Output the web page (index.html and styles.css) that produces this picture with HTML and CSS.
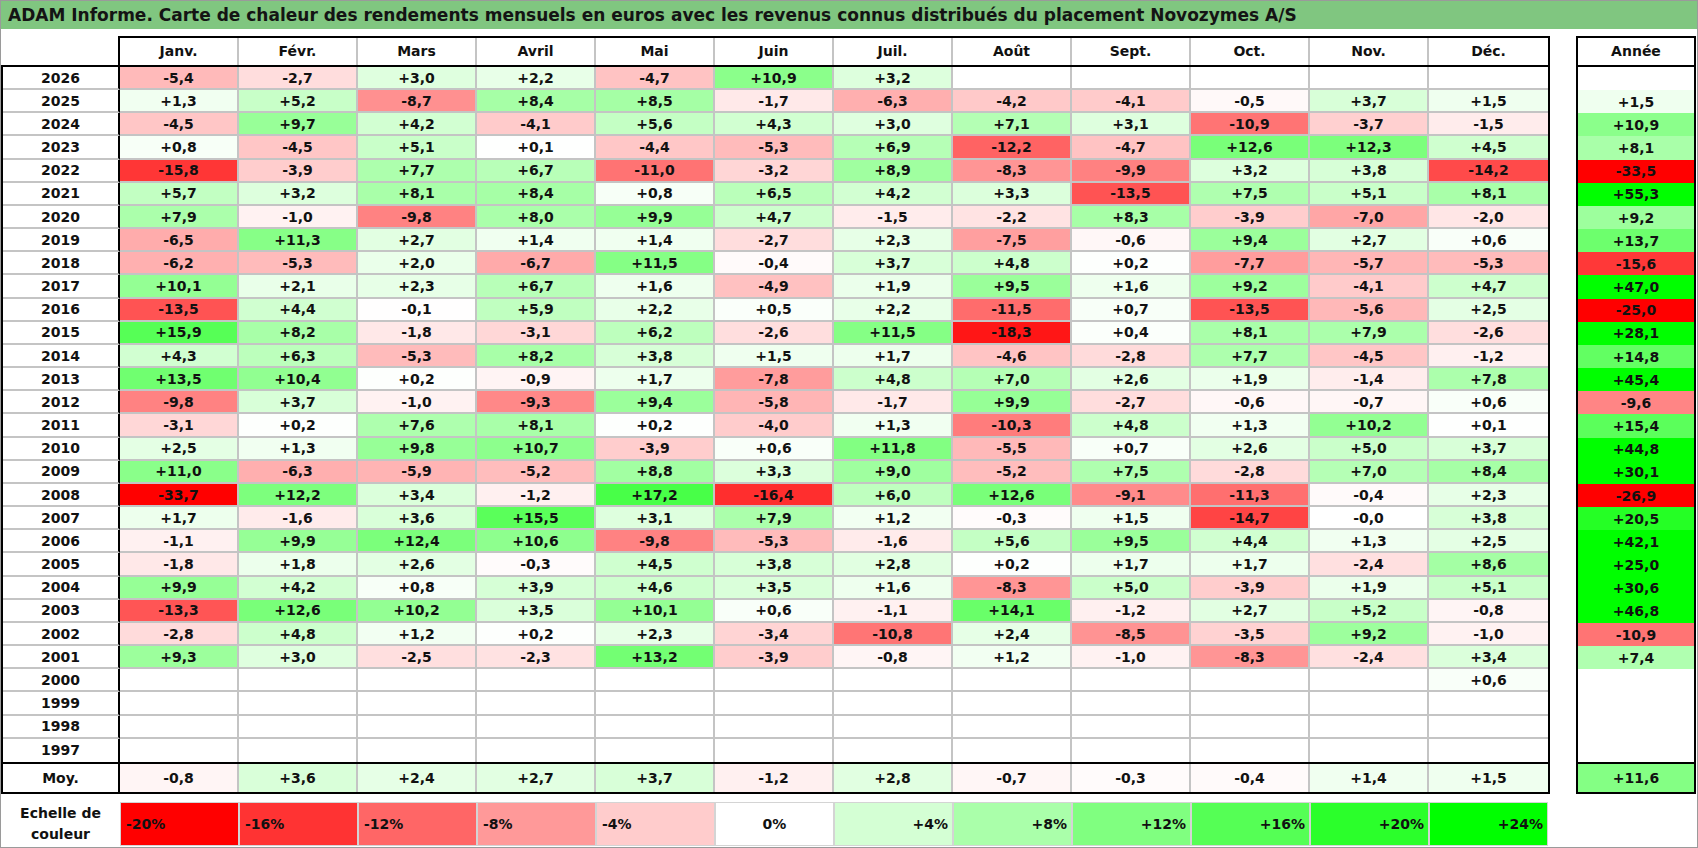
FILE: index.html
```html
<!DOCTYPE html>
<html lang="fr">
<head>
<meta charset="utf-8">
<title>ADAM Informe</title>
<link rel="stylesheet" href="styles.css">
</head>
<body>
<div class="frame">
  <div class="title">ADAM Informe. Carte de chaleur des rendements mensuels en euros avec les revenus connus distribués du placement Novozymes A/S</div>
  <div class="sheet">
    <div class="main">
      <div class="head">
        <div class="corner"></div>
        <div class="months">
          <div class="hcell">Janv.</div>
          <div class="hcell">Févr.</div>
          <div class="hcell">Mars</div>
          <div class="hcell">Avril</div>
          <div class="hcell">Mai</div>
          <div class="hcell">Juin</div>
          <div class="hcell">Juil.</div>
          <div class="hcell">Août</div>
          <div class="hcell">Sept.</div>
          <div class="hcell">Oct.</div>
          <div class="hcell">Nov.</div>
          <div class="hcell">Déc.</div>
        </div>
      </div>
      <div class="body" id="body"></div>
      <div class="moy" id="moy"></div>
      <div class="legend">
        <div class="llabel">Echelle de<br>couleur</div>
        <div class="lcell neg n20">-20%</div>
        <div class="lcell neg n16">-16%</div>
        <div class="lcell neg n12">-12%</div>
        <div class="lcell neg n8">-8%</div>
        <div class="lcell neg n4">-4%</div>
        <div class="lcell zero">0%</div>
        <div class="lcell pos p4">+4%</div>
        <div class="lcell pos p8">+8%</div>
        <div class="lcell pos p12">+12%</div>
        <div class="lcell pos p16">+16%</div>
        <div class="lcell pos p20">+20%</div>
        <div class="lcell pos p24">+24%</div>
      </div>
    </div>
    <div class="annee">
      <div class="ahead">Année</div>
      <div class="abody" id="abody"></div>
      <div class="amoy" id="amoy"></div>
    </div>
  </div>
</div>
<script src="script.js"></script>
</body>
</html>
```

FILE: styles.css
```css
body {
  margin: 0;
  font-family: "DejaVu Sans", "Liberation Sans", sans-serif;
  font-weight: bold;
  color: #111;
  background: #fff;
}

.frame {
  width: 1698px;
  height: 848px;
  box-sizing: border-box;
  border: 1px solid #9a9a9a;
  background: #fff;
  overflow: hidden;
}

.title {
  height: 28px;
  line-height: 28px;
  background: #80c680;
  font-size: 17px;
  padding-left: 7px;
  white-space: nowrap;
  color: #141414;
}

.sheet {
  display: flex;
  align-items: flex-start;
  gap: 26px;
  margin-top: 7px;
}

.main {
  width: 1549px;
}

.head {
  display: flex;
}

.corner {
  width: 117px;
}

.months {
  display: grid;
  grid-template-columns: repeat(12, 119px);
  border: 2px solid #000;
  border-bottom: none;
  height: 27px;
}

.hcell {
  box-sizing: border-box;
  border-right: 2px solid #c4c4c4;
  text-align: center;
  line-height: 27px;
  font-size: 14px;
}

.hcell:last-child {
  border-right: none;
}

.body {
  border: 2px solid #000;
  height: 695px;
  display: grid;
  grid-template-rows: repeat(30, 1fr);
}

.row {
  display: grid;
  grid-template-columns: 117px repeat(12, 119px);
}

.cell {
  box-sizing: border-box;
  border-right: 2px solid #c4c4c4;
  border-bottom: 2px solid #c4c4c4;
  display: flex;
  align-items: center;
  justify-content: center;
  font-size: 14px;
}

.row .ylab {
  border-right: 2px solid #000;
}

.row .cell:last-child {
  border-right: none;
}

.body .row:last-child .cell,
.moy .cell {
  border-bottom: none;
}

.moy {
  border: 2px solid #000;
  border-top: none;
  height: 28px;
  display: grid;
}

.legend {
  display: grid;
  grid-template-columns: 119px repeat(12, 119px);
  height: 44px;
  margin-top: 8px;
}

.llabel {
  font-size: 14px;
  line-height: 21px;
  text-align: center;
  padding-top: 1px;
}

.lcell {
  box-sizing: border-box;
  border: 1px solid #d4d4d4;
  display: flex;
  align-items: center;
  font-size: 14px;
}

.neg { justify-content: flex-start; padding-left: 5px; }
.zero { justify-content: center; }
.pos { justify-content: flex-end; padding-right: 4px; }

.n20 { background: #ff0000; }
.n16 { background: #ff3333; }
.n12 { background: #ff6666; }
.n8 { background: #ff9999; }
.n4 { background: #ffcccc; }
.zero { background: #ffffff; }
.p4 { background: #d4ffd4; }
.p8 { background: #aaffaa; }
.p12 { background: #80ff80; }
.p16 { background: #55ff55; }
.p20 { background: #2bff2b; }
.p24 { background: #00ff00; }

.annee {
  width: 120px;
}

.ahead {
  border: 2px solid #000;
  border-bottom: none;
  height: 27px;
  line-height: 27px;
  text-align: center;
  font-size: 14px;
}

.abody {
  border: 2px solid #000;
  height: 695px;
  display: grid;
  grid-template-rows: repeat(30, 1fr);
}

.acell {
  display: flex;
  align-items: center;
  justify-content: center;
  font-size: 14px;
}

.amoy {
  border: 2px solid #000;
  border-top: none;
  height: 28px;
  display: grid;
}
```

FILE: script.js
```javascript
const DATA = [
  [2026, "-5,4 -2,7 +3,0 +2,2 -4,7 +10,9 +3,2 _ _ _ _ _ _"],
  [2025, "+1,3 +5,2 -8,7 +8,4 +8,5 -1,7 -6,3 -4,2 -4,1 -0,5 +3,7 +1,5 +1,5"],
  [2024, "-4,5 +9,7 +4,2 -4,1 +5,6 +4,3 +3,0 +7,1 +3,1 -10,9 -3,7 -1,5 +10,9"],
  [2023, "+0,8 -4,5 +5,1 +0,1 -4,4 -5,3 +6,9 -12,2 -4,7 +12,6 +12,3 +4,5 +8,1"],
  [2022, "-15,8 -3,9 +7,7 +6,7 -11,0 -3,2 +8,9 -8,3 -9,9 +3,2 +3,8 -14,2 -33,5"],
  [2021, "+5,7 +3,2 +8,1 +8,4 +0,8 +6,5 +4,2 +3,3 -13,5 +7,5 +5,1 +8,1 +55,3"],
  [2020, "+7,9 -1,0 -9,8 +8,0 +9,9 +4,7 -1,5 -2,2 +8,3 -3,9 -7,0 -2,0 +9,2"],
  [2019, "-6,5 +11,3 +2,7 +1,4 +1,4 -2,7 +2,3 -7,5 -0,6 +9,4 +2,7 +0,6 +13,7"],
  [2018, "-6,2 -5,3 +2,0 -6,7 +11,5 -0,4 +3,7 +4,8 +0,2 -7,7 -5,7 -5,3 -15,6"],
  [2017, "+10,1 +2,1 +2,3 +6,7 +1,6 -4,9 +1,9 +9,5 +1,6 +9,2 -4,1 +4,7 +47,0"],
  [2016, "-13,5 +4,4 -0,1 +5,9 +2,2 +0,5 +2,2 -11,5 +0,7 -13,5 -5,6 +2,5 -25,0"],
  [2015, "+15,9 +8,2 -1,8 -3,1 +6,2 -2,6 +11,5 -18,3 +0,4 +8,1 +7,9 -2,6 +28,1"],
  [2014, "+4,3 +6,3 -5,3 +8,2 +3,8 +1,5 +1,7 -4,6 -2,8 +7,7 -4,5 -1,2 +14,8"],
  [2013, "+13,5 +10,4 +0,2 -0,9 +1,7 -7,8 +4,8 +7,0 +2,6 +1,9 -1,4 +7,8 +45,4"],
  [2012, "-9,8 +3,7 -1,0 -9,3 +9,4 -5,8 -1,7 +9,9 -2,7 -0,6 -0,7 +0,6 -9,6"],
  [2011, "-3,1 +0,2 +7,6 +8,1 +0,2 -4,0 +1,3 -10,3 +4,8 +1,3 +10,2 +0,1 +15,4"],
  [2010, "+2,5 +1,3 +9,8 +10,7 -3,9 +0,6 +11,8 -5,5 +0,7 +2,6 +5,0 +3,7 +44,8"],
  [2009, "+11,0 -6,3 -5,9 -5,2 +8,8 +3,3 +9,0 -5,2 +7,5 -2,8 +7,0 +8,4 +30,1"],
  [2008, "-33,7 +12,2 +3,4 -1,2 +17,2 -16,4 +6,0 +12,6 -9,1 -11,3 -0,4 +2,3 -26,9"],
  [2007, "+1,7 -1,6 +3,6 +15,5 +3,1 +7,9 +1,2 -0,3 +1,5 -14,7 -0,0 +3,8 +20,5"],
  [2006, "-1,1 +9,9 +12,4 +10,6 -9,8 -5,3 -1,6 +5,6 +9,5 +4,4 +1,3 +2,5 +42,1"],
  [2005, "-1,8 +1,8 +2,6 -0,3 +4,5 +3,8 +2,8 +0,2 +1,7 +1,7 -2,4 +8,6 +25,0"],
  [2004, "+9,9 +4,2 +0,8 +3,9 +4,6 +3,5 +1,6 -8,3 +5,0 -3,9 +1,9 +5,1 +30,6"],
  [2003, "-13,3 +12,6 +10,2 +3,5 +10,1 +0,6 -1,1 +14,1 -1,2 +2,7 +5,2 -0,8 +46,8"],
  [2002, "-2,8 +4,8 +1,2 +0,2 +2,3 -3,4 -10,8 +2,4 -8,5 -3,5 +9,2 -1,0 -10,9"],
  [2001, "+9,3 +3,0 -2,5 -2,3 +13,2 -3,9 -0,8 +1,2 -1,0 -8,3 -2,4 +3,4 +7,4"],
  [2000, "_ _ _ _ _ _ _ _ _ _ _ +0,6 _"],
  [1999, "_ _ _ _ _ _ _ _ _ _ _ _ _"],
  [1998, "_ _ _ _ _ _ _ _ _ _ _ _ _"],
  [1997, "_ _ _ _ _ _ _ _ _ _ _ _ _"]
];
const MOY = "-0,8 +3,6 +2,4 +2,7 +3,7 -1,2 +2,8 -0,7 -0,3 -0,4 +1,4 +1,5 +11,6";

function colorFor(s) {
  if (s === "_") return "";
  const v = parseFloat(s.replace(",", "."));
  if (v < 0) {
    const c = Math.round(255 * (1 - Math.min(-v / 20, 1)));
    return "rgb(255," + c + "," + c + ")";
  }
  const c = Math.round(255 * (1 - Math.min(v / 24, 1)));
  return "rgb(" + c + ",255," + c + ")";
}

function makeCell(cls, s) {
  const d = document.createElement("div");
  d.className = cls;
  if (s !== "_") {
    d.textContent = s;
    const bg = colorFor(s);
    if (bg) d.style.background = bg;
  }
  return d;
}

function makeRow(label, vals) {
  const row = document.createElement("div");
  row.className = "row";
  const y = document.createElement("div");
  y.className = "cell ylab";
  y.textContent = label;
  row.appendChild(y);
  for (let i = 0; i < 12; i++) row.appendChild(makeCell("cell", vals[i]));
  return row;
}

const body = document.getElementById("body");
const abody = document.getElementById("abody");
DATA.forEach(([year, str]) => {
  const vals = str.split(" ");
  body.appendChild(makeRow(String(year), vals));
  abody.appendChild(makeCell("acell", vals[12]));
});

const mv = MOY.split(" ");
document.getElementById("moy").appendChild(makeRow("Moy.", mv));
document.getElementById("amoy").appendChild(makeCell("acell", mv[12]));
```
